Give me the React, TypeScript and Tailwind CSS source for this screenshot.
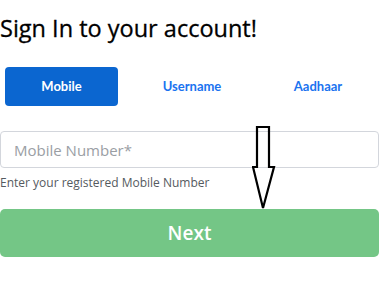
import { useState } from "react"

const tabs = ["Mobile", "Username", "Aadhaar"]

function DownArrow() {
    return (
        <svg className="pointer-events-none absolute left-[252px] top-[126px]" width="24" height="84" viewBox="0 0 24 84">
            <path d="M5 1 H17 V41 H22 L11 82 L1 41 H5 Z" fill="none" stroke="#000" strokeWidth="2.2" strokeLinejoin="miter" />
        </svg>
    )
}

export default function App() {
    const [active, setActive] = useState("Mobile")

    return (
        <div className="relative h-[281px] w-[390px] bg-white font-['Open_Sans',sans-serif]">
            <div className="w-[379px] pt-[13px]">
                <h1 className="text-[23.5px] leading-[31px] text-black [-webkit-text-stroke:0.3px_#000]">Sign In to your account!</h1>

                <div className="mt-[23px] grid grid-cols-[113px_148px_104px] pl-[5px] font-['Lato',sans-serif]">
                    {tabs.map((t) => (
                        <button
                            key={t}
                            onClick={() => setActive(t)}
                            className={
                                active === t
                                    ? "h-[39px] rounded-[4px] bg-[#0b66d0] pt-[1px] text-[13px] font-bold text-white"
                                    : "h-[39px] rounded-[4px] pt-[1px] text-[13px] font-bold text-[#1a73f0]"
                            }
                        >
                            {t}
                        </button>
                    ))}
                </div>

                <input
                    placeholder="Mobile Number*"
                    className="mt-[25px] block h-[37px] w-full rounded-[4px] border border-[#d3d6dc] px-[13px] text-[15px] text-gray-700 outline-none placeholder:text-[#9a9ea4]"
                />
                <p className="mt-[7px] text-[12px] leading-[16px] text-[#555a60]">Enter your registered Mobile Number</p>

                <button className="mt-[18px] h-[48px] w-full rounded-[5px] bg-[#74c686] text-[19px] font-semibold text-white">
                    Next
                </button>
            </div>
            <DownArrow />
        </div>
    )
}
